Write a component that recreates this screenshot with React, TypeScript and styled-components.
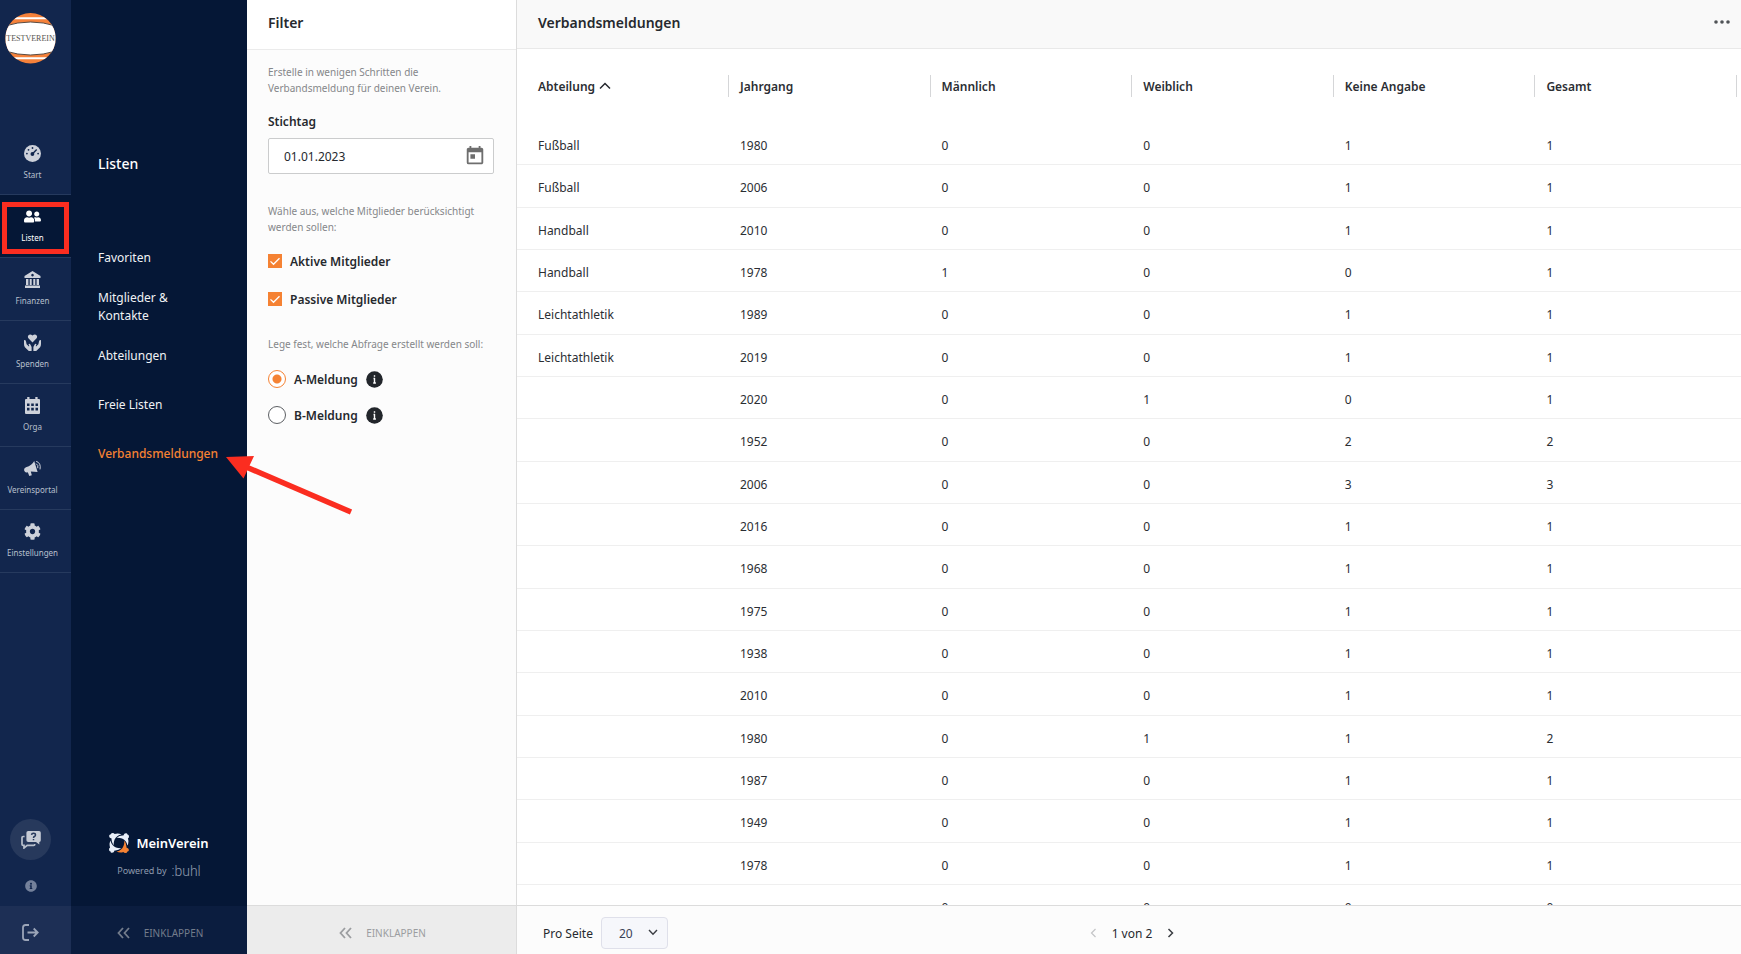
import React from "react";
import styled, { createGlobalStyle, css } from "styled-components";
import { MdToday } from "react-icons/md";
import { FaUserFriends, FaCog, FaInfoCircle } from "react-icons/fa";

const GlobalStyle = createGlobalStyle`
  *, *::before, *::after { box-sizing: border-box; }
  body { margin: 0; background: #fff; color: #26292e; font-family: "Noto Sans", "Open Sans", sans-serif; font-size: 12px; }
  button, input, select { font: inherit; color: inherit; margin: 0; }
  button { background: none; border: 0; padding: 0; cursor: pointer; }
  a { color: inherit; text-decoration: none; }
  h1, h2, p, ul { margin: 0; padding: 0; }
  ul { list-style: none; }
`;

const Page = styled.div`
  position: relative;
  display: flex;
  height: 100vh;
  overflow: hidden;
`;

/* ---------- icon rail ---------- */

const Rail = styled.nav`
  display: flex;
  flex-direction: column;
  flex: 0 0 71px;
  background: #12264d;
`;

const ClubLogo = styled.a`
  display: block;
  width: 51px;
  height: 51px;
  margin: 13px 5px 68px;
`;

const RailLink = styled.a<{ $active?: boolean }>`
  position: relative;
  display: flex;
  flex-direction: column;
  align-items: center;
  gap: 7px;
  height: 63px;
  padding: 13px 6px 0 0;
  border-bottom: 1px solid #263a5e;
  font-size: 8px;
  line-height: 12px;
  color: ${(p) => (p.$active ? "#ffffff" : "#b9c0cd")};
  background: ${(p) => (p.$active ? "#051736" : "transparent")};

  svg {
    width: 17px;
    height: 17px;
    fill: currentColor;
    color: ${(p) => (p.$active ? "#ffffff" : "#cdd1da")};
  }
`;

const Highlight = styled.span`
  position: absolute;
  inset: 7px 2px 3px;
  border: 5px solid #fb2d20;
`;

const RailBottom = styled.div`
  display: flex;
  flex-direction: column;
  align-items: center;
  margin-top: auto;
  padding: 0 10px 14px 0;
  gap: 20px;
`;

const HelpButton = styled.button`
  display: grid;
  place-items: center;
  width: 41px;
  height: 41px;
  border-radius: 50%;
  background: #27395c;
`;

const InfoButton = styled.button`
  display: grid;
  height: 12px;
  color: #74819b;
`;

const LogoutButton = styled.button`
  display: grid;
  place-items: center;
  flex: 0 0 48px;
  padding: 5px 10px 0 0;
  background: #1d2f55;
`;

/* ---------- sub navigation ---------- */

const SubNav = styled.nav`
  display: flex;
  flex-direction: column;
  flex: 0 0 176px;
  min-width: 0;
  background: #051736;
  color: #f0f2f5;
`;

const SubTitle = styled.h2`
  margin: 153px 0 58px 27px;
  font-size: 14px;
  line-height: 22px;
  font-weight: 500;
  color: #fff;
`;

const SubLink = styled.a<{ $active?: boolean }>`
  display: flex;
  align-items: center;
  height: 49px;
  padding: 0 28px 0 27px;
  line-height: 18px;
  ${(p) =>
    p.$active &&
    css`
      color: #f58233;
      font-weight: 500;
    `}
`;

const Brand = styled.div`
  display: flex;
  flex-direction: column;
  align-items: center;
  gap: 9px;
  margin: auto 0 27px;
`;

const BrandName = styled.div`
  display: flex;
  align-items: center;
  gap: 7px;
  font-size: 13px;
  line-height: 22px;
  font-weight: 600;
  color: #fff;
`;

const Powered = styled.div`
  display: flex;
  align-items: center;
  gap: 5px;
  font-size: 9px;
  line-height: 16px;
  color: #8e9aad;

  b {
    font-family: Roboto, sans-serif;
    font-weight: 300;
    font-size: 14px;
  }
`;

const Collapse = styled.button<{ $dark?: boolean }>`
  display: flex;
  align-items: center;
  justify-content: center;
  gap: 14px;
  flex: 0 0 48px;
  padding: 5px 0 0 2px;
  font-size: 10px;
  color: ${(p) => (p.$dark ? "#737c8b" : "#9b9da0")};
  background: ${(p) => (p.$dark ? "#0b1d3f" : "#ececec")};
  ${(p) =>
    !p.$dark &&
    css`
      flex-basis: 49px;
      border-top: 1px solid #dcdcdc;
    `}
`;

/* ---------- filter panel ---------- */

const Filter = styled.aside`
  display: flex;
  flex-direction: column;
  flex: 0 0 270px;
  min-width: 0;
  background: #fcfcfc;
  border-right: 1px solid #dcdcdc;
`;

const PanelTitle = styled.h2`
  flex: 0 0 50px;
  padding: 12px 21px 0;
  background: #fff;
  border-bottom: 1px solid #ebebeb;
  font-size: 14px;
  line-height: 22px;
  font-weight: 600;
`;

const FilterForm = styled.form`
  flex: 1;
  padding: 14px 22px 14px 21px;
`;

const Hint = styled.p`
  font-size: 10px;
  line-height: 16px;
  color: #85878a;
`;

const DateLabel = styled.label`
  display: block;
  margin: 16px 0 6px;
  line-height: 20px;
  font-weight: 600;
`;

const DateBox = styled.div`
  display: flex;
  align-items: center;
  height: 36px;
  margin-bottom: 29px;
  padding: 0 7px 0 15px;
  border: 1px solid #cbcccd;
  border-radius: 2px;
  background: #fff;

  input {
    flex: 1;
    min-width: 0;
    padding: 0;
    border: 0;
    background: none;
    outline: none;
  }
  button {
    display: grid;
    color: #6e6e6e;
  }
`;

const Checks = styled.div`
  display: grid;
  gap: 18px;
  margin: 16px 0 27px;
`;

const Radios = styled.div`
  display: grid;
  gap: 16px;
  margin-top: 17px;
`;

const Option = styled.div`
  display: flex;
  align-items: center;
  gap: 8px;
  height: 20px;
  font-weight: 600;

  label {
    padding-top: 1px;
    line-height: 20px;
  }
  button {
    display: grid;
    color: #22262b;
  }
`;

const Check = styled.input`
  appearance: none;
  width: 14px;
  height: 14px;
  background: #f58233
    url("data:image/svg+xml,%3Csvg xmlns='http://www.w3.org/2000/svg' viewBox='0 0 14 14'%3E%3Cpath d='M2.5 7.4l3 2.9 6-6' fill='none' stroke='%23fff' stroke-width='1.3'/%3E%3C/svg%3E");
`;

const Radio = styled.input`
  appearance: none;
  width: 18px;
  height: 18px;
  border: 1px solid #5c5f63;
  border-radius: 50%;
  background: #fff;

  &:checked {
    border-color: #f58233;
    background: radial-gradient(circle, #f58233 4px, #fff 5px);
  }
`;

/* ---------- main list ---------- */

const Main = styled.main`
  display: flex;
  flex-direction: column;
  flex: 1;
  min-width: 0;
`;

const MainHeader = styled.header`
  display: flex;
  justify-content: space-between;
  flex: 0 0 49px;
  padding: 12px 10px 0 21px;
  background: #f9f9f9;
  border-bottom: 1px solid #e9e9e9;

  h1 {
    font-size: 14px;
    line-height: 22px;
    font-weight: 600;
  }
  button {
    display: grid;
    place-items: center;
    height: 20px;
  }
`;

const TableArea = styled.div`
  flex: 1;
  min-height: 0;
  overflow: hidden;
`;

const Table = styled.table`
  width: 100%;
  table-layout: fixed;
  border-collapse: separate;
  border-spacing: 0;
  color: #2b2e33;

  tbody tr {
    height: 42px;
  }
  tbody tr:nth-child(3n + 2) {
    height: 43px;
  }
`;

const FirstCol = styled.col`
  width: 212px;
`;

const EndCol = styled.col`
  width: 4px;
`;

const Head = styled.th`
  height: 74px;
  padding: 0 0 0 11px;
  text-align: left;
  font-weight: 600;

  &:first-child {
    padding-left: 21px;
  }
  &:last-child {
    padding-right: 4px;
  }
`;

const HeadInner = styled.div`
  display: flex;
  align-items: center;
  gap: 4px;
  height: 22px;
  border-right: 1px solid #d5d6d8;
`;

const Cell = styled.td`
  padding: 4px 0 0 11px;
  line-height: 18px;
  border-bottom: 1px solid #efefef;

  &:first-child {
    padding-left: 21px;
  }
`;

const Footer = styled.footer`
  display: grid;
  grid-template-columns: 1fr auto 1fr;
  align-items: center;
  flex: 0 0 49px;
  padding: 6px 20px 0 26px;
  background: #fcfcfc;
  border-top: 1px solid #dcdcdc;
`;

const PageSize = styled.div`
  display: flex;
  align-items: center;
  gap: 8px;
`;

const SelectWrap = styled.div`
  position: relative;

  select {
    appearance: none;
    display: block;
    width: 67px;
    height: 32px;
    padding: 0 30px 0 17px;
    border: 1px solid #dfe0ea;
    border-radius: 4px;
    background: #f6f7fb;
    color: #3c4257;
  }
  svg {
    position: absolute;
    right: 10px;
    top: 12px;
    pointer-events: none;
  }
`;

const Pager = styled.div`
  display: flex;
  align-items: center;
  gap: 15px;

  button {
    display: grid;
  }
`;

const Pointer = styled.svg`
  position: absolute;
  left: 224px;
  top: 452px;
  pointer-events: none;
`;

/* ---------- drawings ---------- */

const ClubBadge = () => (
  <svg width="51" height="51" viewBox="0 0 51 51">
    <clipPath id="badge">
      <circle cx="25.5" cy="25.3" r="25.2" />
    </clipPath>
    <g clipPath="url(#badge)">
      <rect width="51" height="51" fill="#f5813a" />
      <path d="M0 5.2H51M0 45.2H51" stroke="#fff" strokeWidth="2" />
      <path d="M0 13Q25.5 5 51 13V38Q25.5 46 0 38Z" fill="#fff" stroke="#5a4a40" strokeWidth="1" />
    </g>
    <text x="25.5" y="28" textAnchor="middle" fontFamily="Liberation Serif, serif" fontSize="8" fill="#55544f">
      TESTVEREIN
    </text>
  </svg>
);

const GaugeIcon = () => (
  <svg viewBox="0 0 17 17">
    <circle cx="8.5" cy="8.5" r="8.5" />
    <g fill="#12264d">
      <circle cx="2.9" cy="8.6" r="0.9" />
      <circle cx="4.5" cy="4.8" r="0.9" />
      <circle cx="8.5" cy="3" r="0.9" />
      <circle cx="14.1" cy="8.6" r="0.9" />
      <circle cx="8.4" cy="9" r="1.9" />
    </g>
    <path d="M8.6 8.8L12.7 4.6" stroke="#12264d" strokeWidth="1.4" />
  </svg>
);

const BankIcon = () => (
  <svg viewBox="0 0 17 17">
    <path fillRule="evenodd" d="M8.5 0L16.5 5V7H.5V5ZM8.5 2.8a1.3 1.3 0 1 0 .01 0Z" />
    <path d="M2 8h2.4v6H2zM5.7 8h2v6h-2zM9.3 8h2v6h-2zM12.6 8H15v6h-2.4zM1 14.4h15V17H1z" />
  </svg>
);

const DonateIcon = () => (
  <svg viewBox="0 0 17 17">
    <path d="M8.5 8.4L4.4 4.2C2.7 2.2 5.4-1.2 8.5 1.5 11.6-1.2 14.3 2.2 12.6 4.2Z" />
    <path d="M0 6.2Q1.5 5.6 2 7.5L2.6 10.2 5 12.6Q5.7 12.1 4.5 10.2 5.5 9.3 6.5 10.8L7.6 13V17H4.8L.9 13.2Q0 12 0 10Z" />
    <path d="M17 6.2Q15.5 5.6 15 7.5L14.4 10.2 12 12.6Q11.3 12.1 12.5 10.2 11.5 9.3 10.5 10.8L9.4 13V17H12.2L16.1 13.2Q17 12 17 10Z" />
  </svg>
);

const CalendarIcon = () => (
  <svg viewBox="0 0 17 17">
    <path
      fillRule="evenodd"
      d="M3.2 0h2.3v2h5.8V0h2.3v2H15q1 0 1 1V16q0 1-1 1H2q-1 0-1-1V3q0-1 1-1h1.2ZM3 6.5V9h2.5V6.5ZM7.2 6.5V9h2.6V6.5ZM11.5 6.5V9H14V6.5ZM3 10.8v2.6h2.5v-2.6ZM7.2 10.8v2.6h2.6v-2.6ZM11.5 10.8v2.6H14v-2.6Z"
    />
  </svg>
);

const MegaphoneIcon = () => (
  <svg viewBox="0 0 17 17">
    <path d="M10.2 1L13.6 12 6.8 11.5 7.8 15.3 5.3 16 3.8 12.2Q1 13.2.2 10.6-.4 8.2 2 7.2Q8 5.4 10.2 1Z" />
    <path d="M12 3.6Q14.6 4.8 13.8 8.2M12.2 1.3Q17.3 3 16 9.4" fill="none" stroke="currentColor" strokeWidth="1" />
  </svg>
);

const ChatHelpIcon = () => (
  <svg width="20" height="18" viewBox="0 0 20 18">
    <path d="M3.6 5.5H2.2Q1 5.5 1 6.7V13.2Q1 14.4 2.2 14.4H3V17L6.2 14.4H12.6Q13.8 14.4 13.8 13" fill="none" stroke="#b9c0cc" strokeWidth="1.7" />
    <path d="M7.2 0H18q1.8 0 1.8 1.8V9.2Q19.8 11 18.3 11V13.5L15 11H7.2Q5.4 11 5.4 9.2V1.8Q5.4 0 7.2 0Z" fill="#c6cbd5" />
    <path d="M10.5 3.9Q10.7 2.3 12.5 2.3 14.5 2.3 14.5 4 14.5 4.9 13.4 5.5 12.5 6 12.5 6.9M12.5 7.9V9.3" fill="none" stroke="#27395c" strokeWidth="1.5" />
  </svg>
);

const LogoutIcon = () => (
  <svg width="17" height="17" viewBox="0 0 17 17" fill="none" stroke="#9ba5b8" strokeWidth="1.8">
    <path d="M7 1H3.5Q1 1 1 3.5V13.5Q1 16 3.5 16H7" />
    <path d="M5.5 8.5H15.5M11.7 4.5L15.7 8.5 11.7 12.5" />
  </svg>
);

const MeinVereinMark = () => (
  <svg width="20" height="20" viewBox="0 0 20 20">
    {[0, 90, 180, 270].map((a) => (
      <path
        key={a}
        transform={`rotate(${a} 10 10)`}
        fill={a === 0 ? "#f58233" : "#e9eff9"}
        d="M15.3 7.6Q17.8 11 17.4 14.4 20.2 15.2 19.8 17.4 19.3 18.6 18.4 18.4 18.2 20 16.4 20 14.8 20 14.4 18.9 11 20.2 7.5 18.4 10 18.2 12 16.4 15.6 13.4 15.3 7.6Z"
      />
    ))}
  </svg>
);

const DoubleChevron = () => (
  <svg width="13" height="12" viewBox="0 0 13 12" fill="none" stroke="currentColor" strokeWidth="1.8">
    <path d="M6 1L1.5 6 6 11M12 1L7.5 6 12 11" />
  </svg>
);

const InfoDot = () => (
  <svg width="17" height="17" viewBox="0 0 17 17">
    <circle cx="8.5" cy="8.5" r="8.3" fill="currentColor" />
    <path d="M8.5 4.2V5.8M8.5 7V12.3M7.5 7.5H9M7.2 12H9.9" stroke="#fff" strokeWidth="1.4" />
  </svg>
);

/* ---------- data ---------- */

const railItems = [
  { label: "Start", icon: <GaugeIcon /> },
  { label: "Listen", icon: <FaUserFriends />, active: true },
  { label: "Finanzen", icon: <BankIcon /> },
  { label: "Spenden", icon: <DonateIcon /> },
  { label: "Orga", icon: <CalendarIcon /> },
  { label: "Vereinsportal", icon: <MegaphoneIcon /> },
  { label: "Einstellungen", icon: <FaCog /> },
];

const subItems = ["Favoriten", "Mitglieder & Kontakte", "Abteilungen", "Freie Listen", "Verbandsmeldungen"];

const columns = ["Abteilung", "Jahrgang", "Männlich", "Weiblich", "Keine Angabe", "Gesamt"];

const rows: [string, string, number, number, number, number][] = [
  ["Fußball", "1980", 0, 0, 1, 1],
  ["Fußball", "2006", 0, 0, 1, 1],
  ["Handball", "2010", 0, 0, 1, 1],
  ["Handball", "1978", 1, 0, 0, 1],
  ["Leichtathletik", "1989", 0, 0, 1, 1],
  ["Leichtathletik", "2019", 0, 0, 1, 1],
  ["", "2020", 0, 1, 0, 1],
  ["", "1952", 0, 0, 2, 2],
  ["", "2006", 0, 0, 3, 3],
  ["", "2016", 0, 0, 1, 1],
  ["", "1968", 0, 0, 1, 1],
  ["", "1975", 0, 0, 1, 1],
  ["", "1938", 0, 0, 1, 1],
  ["", "2010", 0, 0, 1, 1],
  ["", "1980", 0, 1, 1, 2],
  ["", "1987", 0, 0, 1, 1],
  ["", "1949", 0, 0, 1, 1],
  ["", "1978", 0, 0, 1, 1],
  ["", "", 0, 0, 0, 0],
];

export default function App() {
  return (
    <Page>
      <GlobalStyle />
      <Rail>
        <ClubLogo href="#" aria-label="Testverein">
          <ClubBadge />
        </ClubLogo>
        {railItems.map((item) => (
          <RailLink key={item.label} href="#" $active={item.active}>
            {item.icon}
            {item.label}
            {item.active && <Highlight />}
          </RailLink>
        ))}
        <RailBottom>
          <HelpButton aria-label="Hilfe">
            <ChatHelpIcon />
          </HelpButton>
          <InfoButton aria-label="Info">
            <FaInfoCircle size={12} />
          </InfoButton>
        </RailBottom>
        <LogoutButton aria-label="Abmelden">
          <LogoutIcon />
        </LogoutButton>
      </Rail>

      <SubNav>
        <SubTitle>Listen</SubTitle>
        <ul>
          {subItems.map((label) => (
            <li key={label}>
              <SubLink href="#" $active={label === "Verbandsmeldungen"}>
                {label}
              </SubLink>
            </li>
          ))}
        </ul>
        <Brand>
          <BrandName>
            <MeinVereinMark />
            MeinVerein
          </BrandName>
          <Powered>
            Powered by <b>:buhl</b>
          </Powered>
        </Brand>
        <Collapse $dark>
          <DoubleChevron />
          EINKLAPPEN
        </Collapse>
      </SubNav>

      <Filter>
        <PanelTitle>Filter</PanelTitle>
        <FilterForm>
          <Hint>Erstelle in wenigen Schritten die Verbandsmeldung für deinen Verein.</Hint>
          <DateLabel htmlFor="date">Stichtag</DateLabel>
          <DateBox>
            <input id="date" defaultValue="01.01.2023" />
            <button type="button" aria-label="Kalender">
              <MdToday size={22} />
            </button>
          </DateBox>
          <Hint>Wähle aus, welche Mitglieder berücksichtigt werden sollen:</Hint>
          <Checks>
            <Option>
              <Check type="checkbox" id="active" defaultChecked />
              <label htmlFor="active">Aktive Mitglieder</label>
            </Option>
            <Option>
              <Check type="checkbox" id="passive" defaultChecked />
              <label htmlFor="passive">Passive Mitglieder</label>
            </Option>
          </Checks>
          <Hint>Lege fest, welche Abfrage erstellt werden soll:</Hint>
          <Radios>
            <Option>
              <Radio type="radio" name="report" id="a" defaultChecked />
              <label htmlFor="a">A-Meldung</label>
              <button type="button" aria-label="Info A-Meldung">
                <InfoDot />
              </button>
            </Option>
            <Option>
              <Radio type="radio" name="report" id="b" />
              <label htmlFor="b">B-Meldung</label>
              <button type="button" aria-label="Info B-Meldung">
                <InfoDot />
              </button>
            </Option>
          </Radios>
        </FilterForm>
        <Collapse>
          <DoubleChevron />
          EINKLAPPEN
        </Collapse>
      </Filter>

      <Main>
        <MainHeader>
          <h1>Verbandsmeldungen</h1>
          <button aria-label="Mehr">
            <svg width="18" height="4" viewBox="0 0 18 4" fill="#505357">
              <circle cx="3" cy="2" r="1.8" />
              <circle cx="9" cy="2" r="1.8" />
              <circle cx="15" cy="2" r="1.8" />
            </svg>
          </button>
        </MainHeader>
        <TableArea>
          <Table>
            <colgroup>
              <FirstCol />
              <col span={5} />
              <EndCol />
            </colgroup>
            <thead>
              <tr>
                {columns.map((name, i) => (
                  <Head key={name} scope="col" colSpan={i === 5 ? 2 : 1}>
                    <HeadInner>
                      {name}
                      {i === 0 && (
                        <svg width="12" height="8" viewBox="0 0 12 8" fill="none" stroke="#26292e" strokeWidth="1.5">
                          <path d="M1 6.5L6 1.5 11 6.5" />
                        </svg>
                      )}
                    </HeadInner>
                  </Head>
                ))}
              </tr>
            </thead>
            <tbody>
              {rows.map((row, r) => (
                <tr key={r}>
                  {row.map((value, i) => (
                    <Cell key={i} colSpan={i === 5 ? 2 : 1}>
                      {value}
                    </Cell>
                  ))}
                </tr>
              ))}
            </tbody>
          </Table>
        </TableArea>
        <Footer>
          <PageSize>
            <label htmlFor="size">Pro Seite</label>
            <SelectWrap>
              <select id="size" defaultValue="20">
                <option>20</option>
                <option>50</option>
              </select>
              <svg width="10" height="7" viewBox="0 0 10 7" fill="none" stroke="#3a3d42" strokeWidth="1.4">
                <path d="M1 1L5 5.2 9 1" />
              </svg>
            </SelectWrap>
          </PageSize>
          <Pager>
            <button aria-label="Zurück" disabled>
              <svg width="7" height="10" viewBox="0 0 7 10" fill="none" stroke="#c3c4c6" strokeWidth="1.2">
                <path d="M5.5 1L1.5 5 5.5 9" />
              </svg>
            </button>
            1 von 2
            <button aria-label="Weiter">
              <svg width="7" height="10" viewBox="0 0 7 10" fill="none" stroke="#3a3d42" strokeWidth="1.5">
                <path d="M1.5 1L5.5 5 1.5 9" />
              </svg>
            </button>
          </Pager>
        </Footer>
      </Main>

      <Pointer width="130" height="64" viewBox="0 0 130 64" aria-hidden="true">
        <path d="M20 14L127 60" stroke="#fb2d20" strokeWidth="5.5" />
        <path d="M2 5L30 4 19.5 26.5Z" fill="#fb2d20" />
      </Pointer>
    </Page>
  );
}
